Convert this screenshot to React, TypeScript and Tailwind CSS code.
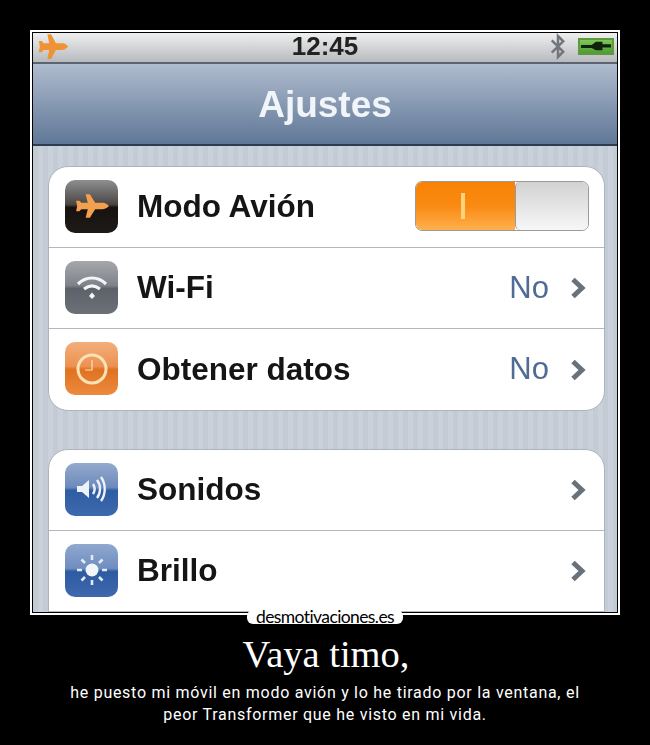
import type { ReactNode } from "react";

const PLANE =
  "M2 7 L5 7 L7 9 L13 9 L11 1 L15 1 L20 9 L27 9 C30 9 32 11 33 12 C32 13 30 15 27 15 L20 15 L15 23 L11 23 L13 15 L7 15 L5 17 L2 17 L3 12 Z";

function Chevron() {
  return (
    <svg width="16" height="22" viewBox="0 0 16 22" className="ml-[21px] blur-[0.5px]">
      <path d="M3 2.5 L12 11 L3 19.5" fill="none" stroke="#69727b" strokeWidth="5" />
    </svg>
  );
}

function Row({
  icon,
  label,
  value,
  chevron,
  children,
  last,
}: {
  icon: ReactNode;
  label: string;
  value?: string;
  chevron?: boolean;
  children?: ReactNode;
  last?: boolean;
}) {
  return (
    <div
      className={`flex h-[81px] items-center pl-[16px] pr-[18px] ${last ? "" : "border-b border-[#b4b8bc]"}`}
    >
      {icon}
      <span className="ml-[19px] flex-1 text-[31.5px] font-bold text-[#151515] blur-[0.6px] font-['Liberation_Sans',sans-serif]">
        {label}
      </span>
      {value && (
        <span className="text-[31px] text-[#4e6c96] blur-[0.5px] font-['Liberation_Sans',sans-serif]">{value}</span>
      )}
      {chevron && <Chevron />}
      {children}
    </div>
  );
}

function Tile({ className, children }: { className: string; children: ReactNode }) {
  return (
    <div
      className={`relative mb-[2px] flex h-[53px] w-[53px] shrink-0 items-center justify-center overflow-hidden rounded-[10px] blur-[0.6px] ${className}`}
    >
      {children}
    </div>
  );
}

export default function App() {
  return (
    <div className="flex h-[745px] w-[650px] flex-col items-center overflow-hidden bg-black pt-[30px]">
      {/* poster frame */}
      <div className="relative h-[585px] w-[590px] shrink-0 border-2 border-white bg-black p-px">
        <div className="flex h-full w-full flex-col overflow-hidden bg-[repeating-linear-gradient(90deg,#c3cbd5_0,#c3cbd5_5px,#cbd1da_5px,#cbd1da_10px)]">
          {/* status bar */}
          <div className="flex h-[31px] shrink-0 items-center border-b-2 border-[#5b6470] bg-gradient-to-b from-[#efefef] to-[#b7babe] pl-[4px] pr-[3px]">
            <svg
              width="32"
              height="27"
              viewBox="0 0 34 24"
              preserveAspectRatio="none"
              className="mb-[2px] blur-[0.6px]"
            >
              <path d={PLANE} fill="#ee9233" />
            </svg>
            <span className="mb-[3px] flex-1 pl-[33px] text-center text-[26px] leading-[26px] font-bold text-[#222] blur-[0.4px] font-['Liberation_Sans',sans-serif]">
              12:45
            </span>
            <svg width="20" height="27" viewBox="0 0 18 26" className="mr-[10px] mb-[2px] blur-[0.5px]">
              <path d="M3 7 L14 18 L9 23 L9 3 L14 8 L3 19" fill="none" stroke="#70767c" strokeWidth="2.4" />
            </svg>
            <div className="mb-[3px] flex h-[17px] w-[36px] items-center justify-center border-2 border-[#5c9a3c] bg-gradient-to-b from-[#7fc75c] to-[#4f9b34] blur-[0.4px]">
              <svg width="30" height="13" viewBox="0 0 28 11">
                <path d="M0 4 H10 L14 1 H20 V3.5 H28 V6.5 H20 V9 H14 L10 7 H0 Z" fill="#10220c" />
              </svg>
            </div>
          </div>

          {/* nav bar */}
          <div className="flex h-[82px] shrink-0 items-center justify-center border-b-2 border-[#2f3c50] bg-gradient-to-b from-[#b0bccf] to-[#5f7796] pt-[1px]">
            <span className="text-[37px] font-bold text-[#f1f4f8] blur-[0.5px] font-['Liberation_Sans',sans-serif]">
              Ajustes
            </span>
          </div>

          <div className="flex flex-col gap-[38px] pl-[15px] pr-[12px] pt-[20px]">
            {/* first group */}
            <div className="rounded-[20px] border border-[#aeb4bb] bg-white">
              <Row
                label="Modo Avión"
                icon={
                  <Tile className="bg-[linear-gradient(#8f8f8f_0,#4a4644_46%,#17120f_52%,#1d1a18_100%)]">
                    <svg width="36" height="26" viewBox="0 0 34 24">
                      <path d={PLANE} fill="#f0a04e" />
                    </svg>
                  </Tile>
                }
              >
                {/* toggle */}
                <div className="mr-[-3px] mb-[2px] flex h-[50px] w-[174px] overflow-hidden rounded-[7px] border border-[#9a9a9a] blur-[0.3px]">
                  <div className="flex w-[99px] items-center justify-center bg-[linear-gradient(#f98208_0,#f98a12_50%,#ffb04e_100%)] pr-[6px]">
                    <div className="h-[26px] w-[4px] bg-[#ffd27d]" />
                  </div>
                  <div className="flex-1 rounded-[5px] border-l border-[#9a9a9a] bg-gradient-to-b from-[#d2d2d2] to-[#f7f7f7]" />
                </div>
              </Row>
              <Row
                label="Wi-Fi"
                value="No"
                chevron
                icon={
                  <Tile className="bg-[linear-gradient(#a5a7ab_0,#7f8389_46%,#5d626a_52%,#6c7178_100%)]">
                    <svg width="34" height="28" viewBox="0 0 34 28">
                      <path d="M3 11 C11 3 23 3 31 11" fill="none" stroke="#f4f5f6" strokeWidth="3.2" />
                      <path d="M9 16 C14 12 20 12 25 16" fill="none" stroke="#f4f5f6" strokeWidth="3.2" />
                      <path d="M14 23 L17 19.5 L20 23 L17 26 Z" fill="#f4f5f6" />
                    </svg>
                  </Tile>
                }
              />
              <Row
                label="Obtener datos"
                value="No"
                chevron
                last
                icon={
                  <Tile className="bg-[linear-gradient(#f3ae7b_0,#ec9150_46%,#e07220_52%,#ec8a3e_100%)]">
                    <svg width="34" height="34" viewBox="0 0 34 34">
                      <circle cx="17" cy="17" r="14" fill="none" stroke="#fbe0b8" strokeWidth="3" />
                      <path d="M17 8 V18 H10" fill="none" stroke="#fbe0b8" strokeWidth="1.2" />
                    </svg>
                  </Tile>
                }
              />
            </div>

            {/* second group, runs past the bottom of the frame */}
            <div className="rounded-t-[20px] border border-[#aeb4bb] bg-white">
              <Row
                label="Sonidos"
                chevron
                icon={
                  <Tile className="bg-[linear-gradient(#94aacd_0,#6c8abb_46%,#2f5ca3_52%,#3d69ad_100%)]">
                    <svg width="36" height="32" viewBox="0 0 36 32">
                      <path d="M3 13 H8 L15 7 V25 L8 19 H3 Z" fill="#eef2f8" />
                      <path d="M19 11 C21 14 21 18 19 21" fill="none" stroke="#eef2f8" strokeWidth="2.4" />
                      <path d="M23 7 C27 12 27 20 23 25" fill="none" stroke="#eef2f8" strokeWidth="2.4" />
                      <path d="M27 4 C32 11 32 21 27 28" fill="none" stroke="#eef2f8" strokeWidth="2.4" />
                    </svg>
                  </Tile>
                }
              />
              <Row
                label="Brillo"
                chevron
                icon={
                  <Tile className="bg-[linear-gradient(#8fa8cf_0,#6f8dbf_46%,#2d5aa2_52%,#4069ad_100%)]">
                    <svg width="36" height="36" viewBox="0 0 36 36">
                      <circle cx="18" cy="18" r="6.5" fill="#f2f6fb" />
                      <path
                        d="M18 3 V8 M18 28 V33 M3 18 H8 M28 18 H33 M7.5 7.5 L11 11 M25 25 L28.5 28.5 M7.5 28.5 L11 25 M25 11 L28.5 7.5"
                        stroke="#e3ebf6"
                        strokeWidth="2.6"
                      />
                    </svg>
                  </Tile>
                }
              />
              <div className="h-[40px]" />
            </div>
          </div>
        </div>

        {/* site tag over the frame's bottom edge */}
        <div className="absolute bottom-[-11px] left-[215px] flex h-[14px] w-[156px] items-center justify-center rounded-[6px] bg-white">
          <span className="text-[17.5px] leading-none tracking-[-0.6px] text-black font-['Lato',sans-serif]">
            desmotivaciones.es
          </span>
        </div>
      </div>

      {/* caption */}
      <h1 className="mt-[17px] pl-[2px] text-[38.5px] leading-[44px] text-white font-['Liberation_Serif',serif]">
        Vaya timo,
      </h1>
      <p className="mt-[6px] w-[530px] text-center text-[16px] leading-[22px] tracking-[0.72px] text-white font-['Roboto',sans-serif]">
        he puesto mi móvil en modo avión y lo he tirado por la ventana, el peor Transformer que he visto en mi vida.
      </p>
    </div>
  );
}
